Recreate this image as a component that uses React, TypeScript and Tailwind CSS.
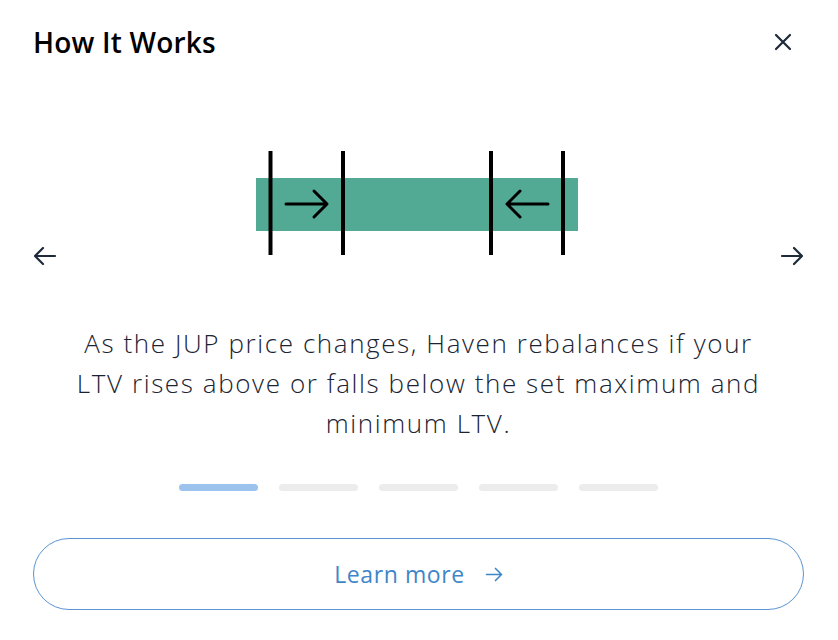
import { useState } from "react";

const STEPS = 5;

/** Thin stroked arrow used for the carousel controls and the CTA. */
function Arrow({ dir, className }: { dir: "left" | "right"; className?: string }) {
  return (
    <svg viewBox="0 0 24 20" className={className} fill="none" stroke="currentColor" strokeWidth={2.2} strokeLinecap="round" strokeLinejoin="round" aria-hidden="true">
      {dir === "left" ? <path d="M22 10H2M10 2l-8 8 8 8" /> : <path d="M2 10h20M14 2l8 8-8 8" />}
    </svg>
  );
}

/** LTV band illustration: green range with the min/max markers pushing inwards. */
function RebalanceIllustration() {
  return (
    <svg viewBox="0 0 322 104" className="mr-[3px] h-[104px] w-[322px]" aria-hidden="true">
      <rect x="0" y="27" width="322" height="53" fill="#52aa95" />
      <g stroke="#000" strokeWidth="4">
        <line x1="14.5" y1="0" x2="14.5" y2="104" />
        <line x1="87" y1="0" x2="87" y2="104" />
        <line x1="235" y1="0" x2="235" y2="104" />
        <line x1="307" y1="0" x2="307" y2="104" />
      </g>
      <g fill="none" stroke="#000" strokeWidth="3" strokeLinecap="round" strokeLinejoin="round">
        <path d="M30 53h40M58 40l13 13-13 13" />
        <path d="M292 53h-40M264 40l-13 13 13 13" />
      </g>
    </svg>
  );
}

export default function App() {
  const [step, setStep] = useState(0);

  return (
    <div className="min-h-screen bg-white pl-[33px] pr-[34px] font-['Open_Sans',sans-serif] text-[#1b2433]">
      <header className="flex items-center justify-between pt-[22px]">
        <h2 className="text-[28px] font-semibold leading-[40px] tracking-[0.2px] text-black">How It Works</h2>
        <button type="button" aria-label="Close" className="mr-[12px] text-[#1e2a3a]">
          <svg viewBox="0 0 18 18" className="h-[18px] w-[18px]" fill="none" stroke="currentColor" strokeWidth={2.2} strokeLinecap="round">
            <path d="M2 2l14 14M16 2L2 16" />
          </svg>
        </button>
      </header>

      <div className="mt-[89px] flex items-end justify-between">
        <button type="button" aria-label="Previous" onClick={() => setStep((s) => Math.max(0, s - 1))} className="-mb-[11px] text-[#1e2a3a]">
          <Arrow dir="left" className="h-[20px] w-[24px]" />
        </button>
        <RebalanceIllustration />
        <button type="button" aria-label="Next" onClick={() => setStep((s) => Math.min(STEPS - 1, s + 1))} className="-mb-[11px] text-[#1e2a3a]">
          <Arrow dir="right" className="h-[20px] w-[24px]" />
        </button>
      </div>

      <p className="mx-auto mt-[68px] max-w-[690px] text-center text-[26px] font-light leading-[40px] tracking-[1.6px]">
        As the JUP price changes, Haven rebalances if your LTV rises above or falls below the set maximum and minimum LTV.
      </p>

      <div className="mt-[41px] flex justify-center gap-[21px]">
        {Array.from({ length: STEPS }, (_, i) => (
          <span key={i} className={i === step ? "h-[7px] w-[79px] rounded-full bg-[#9cc3ee]" : "h-[7px] w-[79px] rounded-full bg-[#ececec]"} />
        ))}
      </div>

      <button
        type="button"
        className="mt-[47px] flex h-[72px] w-full items-center justify-center gap-[20px] rounded-full border-[1.5px] border-[#5b93d4] text-[23px] tracking-[0.6px] text-[#3f86c9]"
      >
        Learn more
        <Arrow dir="right" className="h-[15px] w-[18px]" />
      </button>
    </div>
  );
}
